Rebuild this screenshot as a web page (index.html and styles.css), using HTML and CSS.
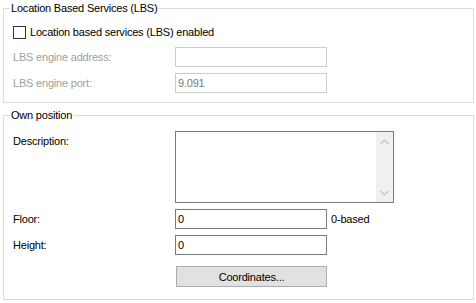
FILE: index.html
```html
<!DOCTYPE html>
<html>
<head>
	<title>LBS settings</title>
	<link rel="stylesheet" href="styles.css">
</head>
<body>
	<fieldset class="group">
		<legend>Location Based Services (LBS)</legend>
		<div class="rows rows-lbs">
			<label class="check"><span class="box"></span>Location based services (LBS) enabled</label>
			<span class="label disabled">LBS engine address:</span>
			<input class="field" type="text" value="" disabled>
			<span class="label disabled">LBS engine port:</span>
			<input class="field" type="text" value="9.091" disabled>
		</div>
	</fieldset>
	<fieldset class="group group-own">
		<legend>Own position</legend>
		<div class="rows rows-own">
			<span class="label label-top">Description:</span>
			<div class="memo">
				<div class="memo-text"></div>
				<div class="scrollbar">
					<svg class="arrow" width="9" height="6" viewBox="0 0 9 6"><path d="M0.5 5 L4.5 1 L8.5 5" fill="none" stroke="#c2c2c2" stroke-width="1.2"/></svg>
					<svg class="arrow" width="9" height="6" viewBox="0 0 9 6"><path d="M0.5 1 L4.5 5 L8.5 1" fill="none" stroke="#c2c2c2" stroke-width="1.2"/></svg>
				</div>
			</div>
			<span class="label">Floor:</span>
			<input class="field" type="text" value="0">
			<span class="hint">0-based</span>
			<span class="label">Height:</span>
			<input class="field" type="text" value="0">
			<button class="btn">Coordinates...</button>
		</div>
	</fieldset>
</body>
</html>
```

FILE: styles.css
```css
html, body {
	margin: 0px;
	padding: 0px;
}
body {
	padding: 1px 2px 0px 3px;
	background-color: #ffffff;
	color: #000000;
	font: 11px "Liberation Sans", Arial, sans-serif;
	letter-spacing: -0.2px;
}
* {
	box-sizing: border-box;
}
.group {
	margin: 0px;
	padding: 0px;
	min-width: 0px;
	border: 1px solid #dcdcdc;
}
.group-own {
	margin-top: 5px;
}
legend {
	margin-left: 6px;
	padding: 0px 1px;
	line-height: 15px;
}
.rows {
	display: grid;
	grid-template-columns: 162px 152px auto;
	row-gap: 6px;
	align-items: center;
	padding-left: 9px;
}
.rows-lbs {
	padding-top: 10px;
	padding-bottom: 9px;
}
.rows-own {
	padding-top: 8px;
	padding-bottom: 12px;
}
.label {
	grid-column: 1;
	line-height: 15px;
}
.label-top {
	align-self: start;
	padding-top: 3px;
}
.disabled {
	color: #a0a0a0;
}
.check {
	grid-column: 1 / span 3;
	display: flex;
	align-items: center;
	height: 13px;
	margin-bottom: 2px;
	line-height: 15px;
}
.box {
	width: 13px;
	height: 13px;
	margin-right: 4px;
	border: 1px solid #333333;
	background-color: #ffffff;
}
.field {
	grid-column: 2;
	width: 152px;
	height: 20px;
	margin: 0px;
	padding: 0px 0px 0px 2px;
	border: 1px solid #7a7a7a;
	background-color: #ffffff;
	color: #000000;
	font: inherit;
	letter-spacing: inherit;
	outline: none;
}
.field:disabled {
	border-color: #cccccc;
	color: #7a7a7a;
}
.hint {
	grid-column: 3;
	padding-left: 4px;
}
.memo {
	grid-column: 2 / span 2;
	display: flex;
	width: 219px;
	height: 72px;
	border: 1px solid #7a7a7a;
	background-color: #ffffff;
}
.memo-text {
	flex: 1;
}
.scrollbar {
	width: 17px;
	display: flex;
	flex-direction: column;
	justify-content: space-between;
	align-items: center;
	padding: 7px 0px 6px 0px;
	background-color: #f0f0f0;
}
.arrow {
	display: block;
}
.btn {
	grid-column: 2;
	width: 151px;
	height: 21px;
	margin: 5px 0px 0px 1px;
	padding: 0px;
	border: 1px solid #adadad;
	background-color: #e1e1e1;
	color: #000000;
	font: inherit;
	letter-spacing: inherit;
}
```
